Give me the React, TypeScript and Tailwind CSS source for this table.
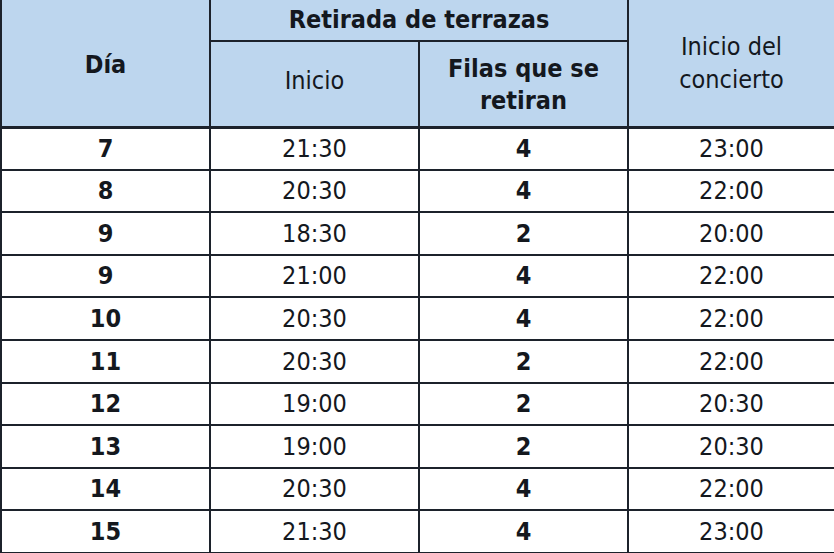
const rows: [string, string, string, string][] = [
  ["7", "21:30", "4", "23:00"],
  ["8", "20:30", "4", "22:00"],
  ["9", "18:30", "2", "20:00"],
  ["9", "21:00", "4", "22:00"],
  ["10", "20:30", "4", "22:00"],
  ["11", "20:30", "2", "22:00"],
  ["12", "19:00", "2", "20:30"],
  ["13", "19:00", "2", "20:30"],
  ["14", "20:30", "4", "22:00"],
  ["15", "21:30", "4", "23:00"],
];

export default function App() {
  return (
    <div className="h-[553px] w-[834px] overflow-hidden bg-white font-['DejaVu_Sans_Condensed','DejaVu_Sans',sans-serif] text-[#14181e]">
      <table className="w-[834px] table-fixed border-collapse text-center text-[25px]">
        <colgroup>
          <col className="w-[209px]" />
          <col className="w-[209px]" />
          <col className="w-[209px]" />
          <col className="w-[207px]" />
        </colgroup>
        <thead className="bg-[#bdd6ee]">
          <tr className="h-[41px]">
            <th
              rowSpan={2}
              className="border-2 border-t-0 border-b-[3px] border-[#1c222b] pt-[4px] font-bold"
            >
              Día
            </th>
            <th
              colSpan={2}
              className="border-2 border-t-0 border-[#1c222b] font-bold leading-[30px]"
            >
              Retirada de terrazas
            </th>
            <th
              rowSpan={2}
              className="border-2 border-t-0 border-b-[3px] border-[#1c222b] pt-0 font-normal leading-[33px]"
            >
              Inicio del
              <br />
              concierto
            </th>
          </tr>
          <tr className="h-[86px]">
            <th className="border-2 border-b-[3px] border-[#1c222b] pb-[6px] font-normal">
              Inicio
            </th>
            <th className="border-2 border-b-[3px] border-[#1c222b] pt-[2px] font-bold leading-[32px]">
              Filas que se
              <br />
              retiran
            </th>
          </tr>
        </thead>
        <tbody>
          {rows.map((r, i) => (
            <tr key={i} className="h-[42.6px]">
              <td className="border-2 border-[#1c222b] font-bold">{r[0]}</td>
              <td className="border-2 border-[#1c222b]">{r[1]}</td>
              <td className="border-2 border-[#1c222b] font-bold">{r[2]}</td>
              <td className="border-2 border-[#1c222b]">{r[3]}</td>
            </tr>
          ))}
        </tbody>
      </table>
    </div>
  );
}
